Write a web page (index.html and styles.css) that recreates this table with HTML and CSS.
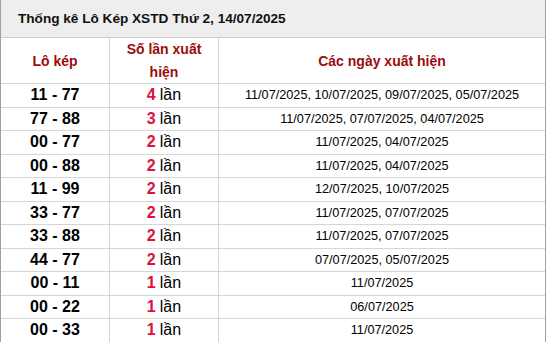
FILE: index.html
```html
<!DOCTYPE html>
<html lang="vi">
<head>
<meta charset="utf-8">
<title>Thống kê Lô Kép XSTD</title>
<link rel="stylesheet" href="styles.css">
</head>
<body>
<div class="stats">
  <div class="title"><b>Thống kê Lô Kép XSTD</b> <span class="date">Thứ 2, 14/07/2025</span></div>
  <div class="row head">
    <div class="cell">Lô kép</div>
    <div class="cell"><span class="wrap">Số lần xuất hiện</span></div>
    <div class="cell">Các ngày xuất hiện</div>
  </div>
  <div class="row"><div class="cell pair">11 - 77</div><div class="cell count"><b>4</b> lần</div><div class="cell days">11/07/2025, 10/07/2025, 09/07/2025, 05/07/2025</div></div>
  <div class="row"><div class="cell pair">77 - 88</div><div class="cell count"><b>3</b> lần</div><div class="cell days">11/07/2025, 07/07/2025, 04/07/2025</div></div>
  <div class="row"><div class="cell pair">00 - 77</div><div class="cell count"><b>2</b> lần</div><div class="cell days">11/07/2025, 04/07/2025</div></div>
  <div class="row"><div class="cell pair">00 - 88</div><div class="cell count"><b>2</b> lần</div><div class="cell days">11/07/2025, 04/07/2025</div></div>
  <div class="row"><div class="cell pair">11 - 99</div><div class="cell count"><b>2</b> lần</div><div class="cell days">12/07/2025, 10/07/2025</div></div>
  <div class="row"><div class="cell pair">33 - 77</div><div class="cell count"><b>2</b> lần</div><div class="cell days">11/07/2025, 07/07/2025</div></div>
  <div class="row"><div class="cell pair">33 - 88</div><div class="cell count"><b>2</b> lần</div><div class="cell days">11/07/2025, 07/07/2025</div></div>
  <div class="row"><div class="cell pair">44 - 77</div><div class="cell count"><b>2</b> lần</div><div class="cell days">07/07/2025, 05/07/2025</div></div>
  <div class="row"><div class="cell pair">00 - 11</div><div class="cell count"><b>1</b> lần</div><div class="cell days">11/07/2025</div></div>
  <div class="row"><div class="cell pair">00 - 22</div><div class="cell count"><b>1</b> lần</div><div class="cell days">06/07/2025</div></div>
  <div class="row"><div class="cell pair">00 - 33</div><div class="cell count"><b>1</b> lần</div><div class="cell days">11/07/2025</div></div>
</div>
</body>
</html>
```
FILE: styles.css
```css
html, body { margin: 0; padding: 0; background: #fff; }
body { font-family: "Liberation Sans", Arial, sans-serif; color: #000; }
.stats {
  width: 546px;
  box-sizing: border-box;
  border-left: 1px solid #a0a0a0;
  border-right: 1px solid #a0a0a0;
}
.title {
  height: 37px;
  background: #eeeeee;
  border-bottom: 1px solid #cfcfcf;
  display: flex;
  align-items: center;
  padding-left: 17px;
  font-size: 13.6px;
  font-weight: bold;
  color: #111;
}
.title b { margin-right: 4px; }
.row {
  display: grid;
  grid-template-columns: 109px 109px 1fr;
  height: 23.5px;
  box-sizing: border-box;
  border-bottom: 1px solid #d6d6d6;
}
.cell {
  display: flex;
  align-items: center;
  justify-content: center;
  text-align: center;
  border-right: 1px solid #d6d6d6;
}
.cell:last-child { border-right: none; }
.head {
  height: 46px;
  color: #9b0c0c;
  font-weight: bold;
  font-size: 14px;
  line-height: 23px;
}
.head .wrap { width: 90px; }
.pair { font-weight: bold; font-size: 16px; }
.count { font-size: 16px; }
.count b { color: #e0103a; margin-right: 4px; }
.days { font-size: 12.7px; }
```
